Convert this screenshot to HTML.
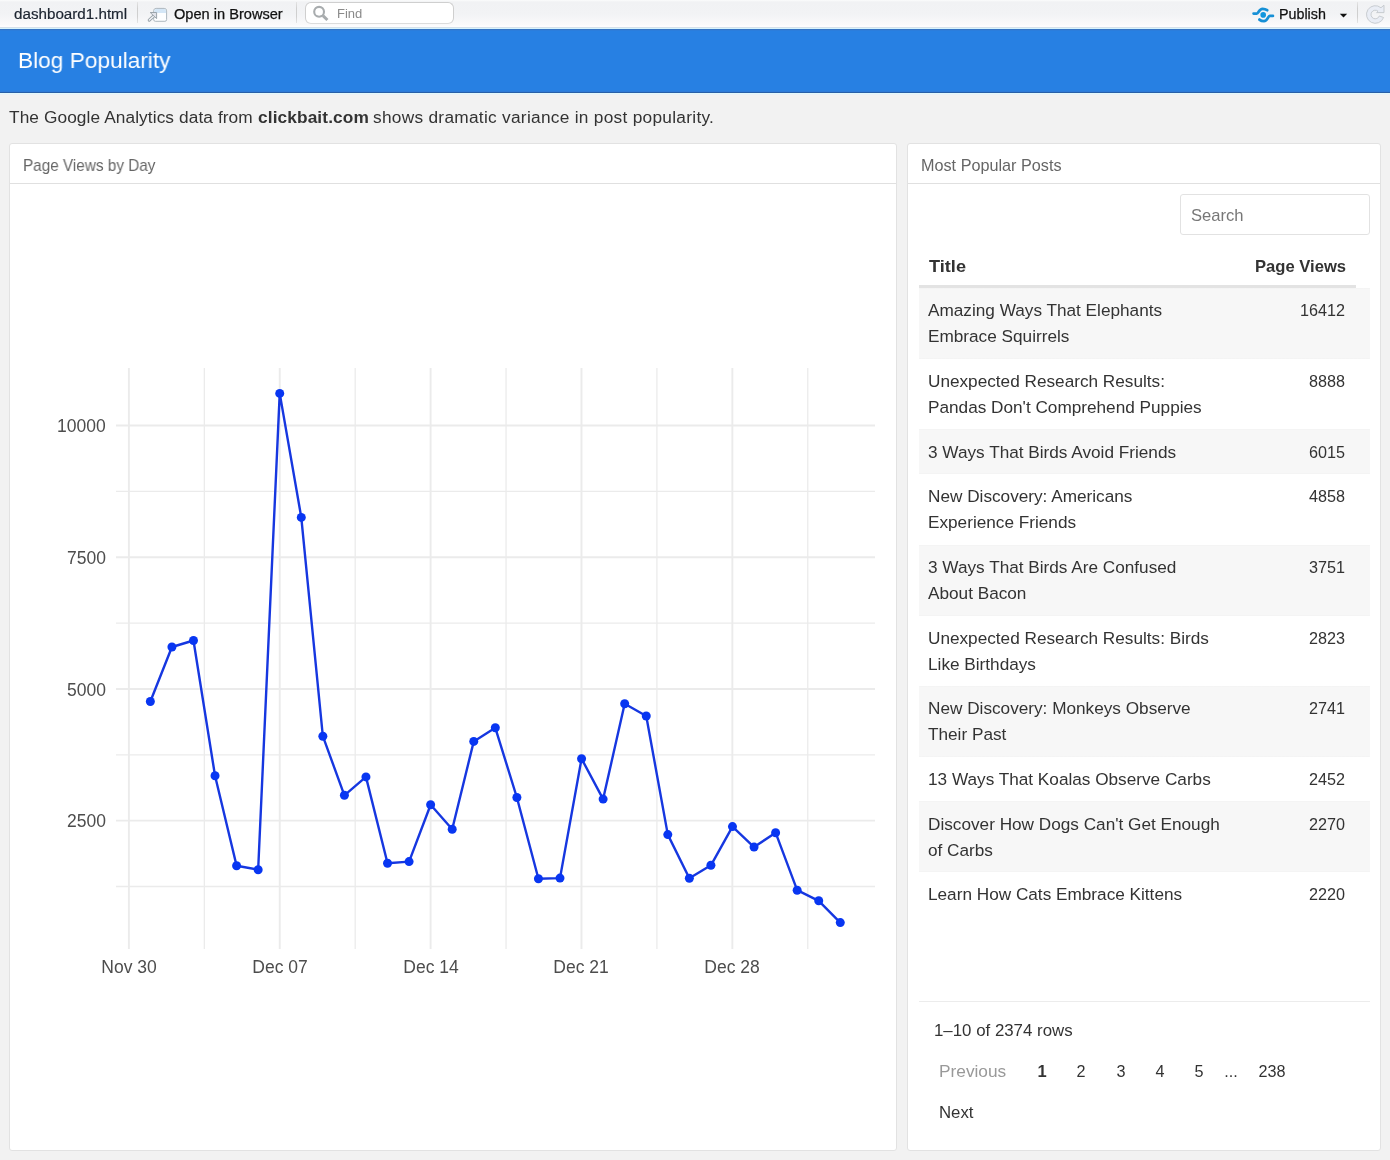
<!DOCTYPE html>
<html><head><meta charset="utf-8"><title>Blog Popularity</title>
<style>
html,body{margin:0;padding:0;width:1390px;height:1160px;overflow:hidden;background:#f2f2f2;position:relative;font-family:'Liberation Sans', sans-serif}
.t{position:absolute;white-space:pre;font-family:'Liberation Sans', sans-serif;will-change:transform}
#tb{position:absolute;left:0;top:0;width:1390px;height:31px;background:linear-gradient(#fbfcfc 0px,#f1f2f4 2px,#f2f3f5 14px,#fafafb 25px,#fdfdfe 26px,#fdfdfe 27px,#d5e0ea 27px,#d5e0ea 28px,#d6f3fc 28px,#d6f3fc 29px,#3574c4 29px,#3574c4 30px,#2c7ddb 30px,#2c7ddb 31px)}
.sep{position:absolute;top:2px;width:1px;height:21px;background:linear-gradient(#e4e4e4,#cfcfcf 30%,#cfcfcf 70%,#e4e4e4)}
#find{position:absolute;left:305px;top:2px;width:149px;height:22px;border:1px solid #cfcfcf;border-bottom-color:#dcdcdc;border-radius:6px;background:#fff;box-sizing:border-box}
#nav{position:absolute;left:0;top:31px;width:1390px;height:64px;background:linear-gradient(#2780e3 0px,#2780e3 59px,#2a7fdf 59px,#2a7fdf 60px,#2e7bd8 60px,#2e7bd8 61px,#295fa8 61px,#295fa8 62px,#e4f9fb 62px,#e4f9fb 63px,#ebf1f7 63px,#ebf1f7 64px)}
.card{position:absolute;background:#fff;border:1px solid #e2e2e2;border-radius:3px;box-sizing:border-box}
.hdr{position:absolute;height:1px;background:#e0e0e0}
#search{position:absolute;left:1180px;top:194px;width:190px;height:41px;border:1px solid #e2e2e2;border-radius:3px;box-sizing:border-box;background:#fff}
</style></head>
<body>
<div id="tb"></div><div class="t" style="left:14px;top:3.75px;font-size:15.2px;line-height:19.76px;color:#1c2430;font-weight:normal;-webkit-text-stroke:0.2px #1c2430">dashboard1.html</div>
<div class="sep" style="left:137px"></div><div id="find"></div><svg style="position:absolute;left:0;top:0" width="1390" height="28" viewBox="0 0 1390 28">
<path d="M153.7 19.6 V10.8 a2.4 2.4 0 0 1 2.4 -2.4 H164.2 a2.4 2.4 0 0 1 2.4 2.4 V19.6 a1.7 1.7 0 0 1 -1.7 1.7 H155.4 a1.7 1.7 0 0 1 -1.7 -1.7 Z" fill="#fdfeff" stroke="#a9b3ba" stroke-width="0.95"/>
<path d="M154.2 12.9 V10.9 a1.9 1.9 0 0 1 1.9 -1.9 H164.2 a1.9 1.9 0 0 1 1.9 1.9 V12.9 Z" fill="#d4e6f6"/>
<path d="M149.3 20.1 L154.4 15.4" stroke="#98a1a8" stroke-width="3.2" stroke-linecap="round"/>
<path d="M149.3 20.1 L154.4 15.4" stroke="#f3f5f8" stroke-width="1.3" stroke-linecap="round"/>
<path d="M150.2 12.5 H156.6 V18.6 Z" fill="#e1e3ea" stroke="#98a1a8" stroke-width="0.95" stroke-linejoin="round"/>
<circle cx="319.1" cy="11.8" r="4.9" fill="none" stroke="#a8acae" stroke-width="2.1"/>
<path d="M322.9 15.7 L327.4 20" stroke="#a8acae" stroke-width="3" stroke-linecap="butt"/>
<path d="M1253.6 13.6 H1256.8 C1258.6 13.6 1259 8.8 1262.6 8.8 C1264.5 8.8 1265.9 9.3 1267.2 10.2" fill="none" stroke="#1690d6" stroke-width="2.8" stroke-linecap="round"/>
<path d="M1259.4 19.6 C1260.6 20.6 1262 21.2 1264 21.2 C1267.5 21.2 1268 15.9 1269.7 15.9 H1272.9" fill="none" stroke="#1690d6" stroke-width="2.8" stroke-linecap="round"/>
<circle cx="1263.2" cy="14.9" r="2.8" fill="#1196de"/>
<path d="M1339.8 13.8 H1347.2 L1343.5 17.4 Z" fill="#111"/>
<path d="M1380.96 7.76 A8.8 8.8 0 1 0 1383.57 17.51 L1379.34 15.97 A4.3 4.3 0 1 1 1378.06 11.21 L1376.6 12.6 L1384 12.6 L1384 5.2 Z" fill="#e9edf5" stroke="#c3c7cc" stroke-width="0.9" stroke-linejoin="round"/>
</svg><div class="t" style="left:174px;top:5.15px;font-size:14.6px;line-height:18.98px;color:#111;font-weight:normal;-webkit-text-stroke:0.25px #111">Open in Browser</div>
<div class="sep" style="left:296px"></div><div class="t" style="left:337px;top:5.95px;font-size:13px;line-height:16.9px;color:#8a8a8a;font-weight:normal;">Find</div>
<div class="t" style="left:1279.4px;top:4.65px;font-size:14.3px;line-height:18.59px;color:#111;font-weight:normal;-webkit-text-stroke:0.25px #111">Publish</div>
<div class="sep" style="left:1357px"></div><div id="nav"></div><div class="t" style="left:18.2px;top:45.58px;font-size:22.9px;line-height:29.77px;color:#fff;font-weight:normal;transform:scaleX(0.99);transform-origin:left center;">Blog Popularity</div>
<div class="t" style="left:9.4px;top:105.66px;font-size:17.3px;line-height:22.49px;color:#333;font-weight:normal;letter-spacing:0.09px">The Google Analytics data from</div>
<div class="t" style="left:258.2px;top:105.66px;font-size:17.3px;line-height:22.49px;color:#333;font-weight:bold;letter-spacing:0.11px">clickbait.com</div>
<div class="t" style="left:373.2px;top:105.66px;font-size:17.3px;line-height:22.49px;color:#333;font-weight:normal;letter-spacing:0.28px">shows dramatic variance in post popularity.</div>
<div class="card" style="left:9px;top:143px;width:888px;height:1008px"></div><div class="hdr" style="left:10px;top:183px;width:886px"></div><div class="t" style="left:23.0px;top:155.56px;font-size:15.9px;line-height:20.67px;color:#666;font-weight:normal;transform:scaleX(0.963);transform-origin:left center;">Page Views by Day</div>
<div class="card" style="left:907px;top:143px;width:474px;height:1008px"></div><div class="hdr" style="left:908px;top:183px;width:472px"></div><div class="t" style="left:920.8px;top:155.56px;font-size:15.9px;line-height:20.67px;color:#666;font-weight:normal;transform:scaleX(1.02);transform-origin:left center;">Most Popular Posts</div>
<svg style="position:absolute;left:0;top:0" width="1390" height="1160" viewBox="0 0 1390 1160">
<line x1="128.90" y1="368" x2="128.90" y2="949" stroke="#ebebeb" stroke-width="1.9"/>
<line x1="204.33" y1="368" x2="204.33" y2="949" stroke="#ebebeb" stroke-width="1.3"/>
<line x1="279.76" y1="368" x2="279.76" y2="949" stroke="#ebebeb" stroke-width="1.9"/>
<line x1="355.19" y1="368" x2="355.19" y2="949" stroke="#ebebeb" stroke-width="1.3"/>
<line x1="430.62" y1="368" x2="430.62" y2="949" stroke="#ebebeb" stroke-width="1.9"/>
<line x1="506.05" y1="368" x2="506.05" y2="949" stroke="#ebebeb" stroke-width="1.3"/>
<line x1="581.48" y1="368" x2="581.48" y2="949" stroke="#ebebeb" stroke-width="1.9"/>
<line x1="656.91" y1="368" x2="656.91" y2="949" stroke="#ebebeb" stroke-width="1.3"/>
<line x1="732.34" y1="368" x2="732.34" y2="949" stroke="#ebebeb" stroke-width="1.9"/>
<line x1="807.77" y1="368" x2="807.77" y2="949" stroke="#ebebeb" stroke-width="1.3"/>
<line x1="116" y1="425.50" x2="875" y2="425.50" stroke="#ebebeb" stroke-width="1.9"/>
<line x1="116" y1="491.36" x2="875" y2="491.36" stroke="#ebebeb" stroke-width="1.3"/>
<line x1="116" y1="557.22" x2="875" y2="557.22" stroke="#ebebeb" stroke-width="1.9"/>
<line x1="116" y1="623.08" x2="875" y2="623.08" stroke="#ebebeb" stroke-width="1.3"/>
<line x1="116" y1="688.94" x2="875" y2="688.94" stroke="#ebebeb" stroke-width="1.9"/>
<line x1="116" y1="754.80" x2="875" y2="754.80" stroke="#ebebeb" stroke-width="1.3"/>
<line x1="116" y1="820.66" x2="875" y2="820.66" stroke="#ebebeb" stroke-width="1.9"/>
<line x1="116" y1="886.52" x2="875" y2="886.52" stroke="#ebebeb" stroke-width="1.3"/>
<polyline points="150.36,701.50 171.92,647.00 193.48,640.50 215.04,775.80 236.60,865.80 258.16,869.70 279.72,393.40 301.28,517.40 322.84,736.20 344.40,795.30 365.96,776.90 387.52,863.30 409.08,861.60 430.64,804.80 452.20,829.30 473.76,741.40 495.32,727.80 516.88,797.50 538.44,878.70 560.00,878.10 581.56,758.70 603.12,799.10 624.68,703.70 646.24,716.00 667.80,834.60 689.36,878.30 710.92,865.30 732.48,826.60 754.04,847.10 775.60,832.70 797.16,890.20 818.72,900.80 840.28,922.60" fill="none" stroke="#1637e0" stroke-width="2.4" stroke-linejoin="round"/>
<circle cx="150.36" cy="701.50" r="4.5" fill="#0836f2"/>
<circle cx="171.92" cy="647.00" r="4.5" fill="#0836f2"/>
<circle cx="193.48" cy="640.50" r="4.5" fill="#0836f2"/>
<circle cx="215.04" cy="775.80" r="4.5" fill="#0836f2"/>
<circle cx="236.60" cy="865.80" r="4.5" fill="#0836f2"/>
<circle cx="258.16" cy="869.70" r="4.5" fill="#0836f2"/>
<circle cx="279.72" cy="393.40" r="4.5" fill="#0836f2"/>
<circle cx="301.28" cy="517.40" r="4.5" fill="#0836f2"/>
<circle cx="322.84" cy="736.20" r="4.5" fill="#0836f2"/>
<circle cx="344.40" cy="795.30" r="4.5" fill="#0836f2"/>
<circle cx="365.96" cy="776.90" r="4.5" fill="#0836f2"/>
<circle cx="387.52" cy="863.30" r="4.5" fill="#0836f2"/>
<circle cx="409.08" cy="861.60" r="4.5" fill="#0836f2"/>
<circle cx="430.64" cy="804.80" r="4.5" fill="#0836f2"/>
<circle cx="452.20" cy="829.30" r="4.5" fill="#0836f2"/>
<circle cx="473.76" cy="741.40" r="4.5" fill="#0836f2"/>
<circle cx="495.32" cy="727.80" r="4.5" fill="#0836f2"/>
<circle cx="516.88" cy="797.50" r="4.5" fill="#0836f2"/>
<circle cx="538.44" cy="878.70" r="4.5" fill="#0836f2"/>
<circle cx="560.00" cy="878.10" r="4.5" fill="#0836f2"/>
<circle cx="581.56" cy="758.70" r="4.5" fill="#0836f2"/>
<circle cx="603.12" cy="799.10" r="4.5" fill="#0836f2"/>
<circle cx="624.68" cy="703.70" r="4.5" fill="#0836f2"/>
<circle cx="646.24" cy="716.00" r="4.5" fill="#0836f2"/>
<circle cx="667.80" cy="834.60" r="4.5" fill="#0836f2"/>
<circle cx="689.36" cy="878.30" r="4.5" fill="#0836f2"/>
<circle cx="710.92" cy="865.30" r="4.5" fill="#0836f2"/>
<circle cx="732.48" cy="826.60" r="4.5" fill="#0836f2"/>
<circle cx="754.04" cy="847.10" r="4.5" fill="#0836f2"/>
<circle cx="775.60" cy="832.70" r="4.5" fill="#0836f2"/>
<circle cx="797.16" cy="890.20" r="4.5" fill="#0836f2"/>
<circle cx="818.72" cy="900.80" r="4.5" fill="#0836f2"/>
<circle cx="840.28" cy="922.60" r="4.5" fill="#0836f2"/>
</svg><div class="t" style="right:1284.1px;top:415.26px;font-size:17.5px;line-height:22.75px;color:#4d4d4d;font-weight:normal;font-family:'Liberation Sans'">10000</div>
<div class="t" style="right:1284.1px;top:546.96px;font-size:17.5px;line-height:22.75px;color:#4d4d4d;font-weight:normal;font-family:'Liberation Sans'">7500</div>
<div class="t" style="right:1284.1px;top:678.76px;font-size:17.5px;line-height:22.75px;color:#4d4d4d;font-weight:normal;font-family:'Liberation Sans'">5000</div>
<div class="t" style="right:1284.1px;top:810.46px;font-size:17.5px;line-height:22.75px;color:#4d4d4d;font-weight:normal;font-family:'Liberation Sans'">2500</div>
<div class="t" style="left:-171.1px;width:600px;text-align:center;top:955.56px;font-size:17.5px;line-height:22.75px;color:#4d4d4d;font-weight:normal;">Nov 30</div>
<div class="t" style="left:-20.24000000000001px;width:600px;text-align:center;top:955.56px;font-size:17.5px;line-height:22.75px;color:#4d4d4d;font-weight:normal;">Dec 07</div>
<div class="t" style="left:130.62px;width:600px;text-align:center;top:955.56px;font-size:17.5px;line-height:22.75px;color:#4d4d4d;font-weight:normal;">Dec 14</div>
<div class="t" style="left:281.48px;width:600px;text-align:center;top:955.56px;font-size:17.5px;line-height:22.75px;color:#4d4d4d;font-weight:normal;">Dec 21</div>
<div class="t" style="left:432.34000000000003px;width:600px;text-align:center;top:955.56px;font-size:17.5px;line-height:22.75px;color:#4d4d4d;font-weight:normal;">Dec 28</div>
<div id="search"></div><div class="t" style="left:1190.6px;top:204.96px;font-size:16.6px;line-height:21.58px;color:#777;font-weight:normal;">Search</div>
<div class="t" style="left:928.8px;top:255.26px;font-size:17.3px;line-height:22.49px;color:#333;font-weight:bold;transform:scaleX(1.05);transform-origin:left center;">Title</div>
<div class="t" style="right:44.299999999999955px;top:255.96px;font-size:16.6px;line-height:21.58px;color:#333;font-weight:bold;">Page Views</div>
<div style="position:absolute;left:919px;top:285px;width:437px;height:3px;background:#e3e3e3"></div><div style="position:absolute;left:919px;top:288.00px;width:451px;height:71.00px;background:linear-gradient(#f2f2f2 0px,#f7f7f7 1.2px,#f7f7f7 calc(100% - 1.2px),#f2f2f2 100%)"></div><div class="t" style="left:928.0px;top:299.26px;font-size:17.2px;line-height:22.36px;color:#333;font-weight:normal;">Amazing Ways That Elephants</div>
<div class="t" style="left:928.0px;top:325.36px;font-size:17.2px;line-height:22.36px;color:#333;font-weight:normal;">Embrace Squirrels</div>
<div class="t" style="right:44.5px;top:300.26px;font-size:16.2px;line-height:21.06px;color:#333;font-weight:normal;">16412</div>
<div class="t" style="left:928.0px;top:369.96px;font-size:17.2px;line-height:22.36px;color:#333;font-weight:normal;">Unexpected Research Results:</div>
<div class="t" style="left:928.0px;top:396.06px;font-size:17.2px;line-height:22.36px;color:#333;font-weight:normal;">Pandas Don't Comprehend Puppies</div>
<div class="t" style="right:44.5px;top:370.96px;font-size:16.2px;line-height:21.06px;color:#333;font-weight:normal;">8888</div>
<div style="position:absolute;left:919px;top:429.40px;width:451px;height:44.90px;background:linear-gradient(#f2f2f2 0px,#f7f7f7 1.2px,#f7f7f7 calc(100% - 1.2px),#f2f2f2 100%)"></div><div class="t" style="left:928.0px;top:440.66px;font-size:17.2px;line-height:22.36px;color:#333;font-weight:normal;">3 Ways That Birds Avoid Friends</div>
<div class="t" style="right:44.5px;top:441.66px;font-size:16.2px;line-height:21.06px;color:#333;font-weight:normal;">6015</div>
<div class="t" style="left:928.0px;top:485.26px;font-size:17.2px;line-height:22.36px;color:#333;font-weight:normal;">New Discovery: Americans</div>
<div class="t" style="left:928.0px;top:511.36px;font-size:17.2px;line-height:22.36px;color:#333;font-weight:normal;">Experience Friends</div>
<div class="t" style="right:44.5px;top:486.26px;font-size:16.2px;line-height:21.06px;color:#333;font-weight:normal;">4858</div>
<div style="position:absolute;left:919px;top:544.70px;width:451px;height:71.00px;background:linear-gradient(#f2f2f2 0px,#f7f7f7 1.2px,#f7f7f7 calc(100% - 1.2px),#f2f2f2 100%)"></div><div class="t" style="left:928.0px;top:555.96px;font-size:17.2px;line-height:22.36px;color:#333;font-weight:normal;">3 Ways That Birds Are Confused</div>
<div class="t" style="left:928.0px;top:582.06px;font-size:17.2px;line-height:22.36px;color:#333;font-weight:normal;">About Bacon</div>
<div class="t" style="right:44.5px;top:556.96px;font-size:16.2px;line-height:21.06px;color:#333;font-weight:normal;">3751</div>
<div class="t" style="left:928.0px;top:626.66px;font-size:17.2px;line-height:22.36px;color:#333;font-weight:normal;">Unexpected Research Results: Birds</div>
<div class="t" style="left:928.0px;top:652.76px;font-size:17.2px;line-height:22.36px;color:#333;font-weight:normal;">Like Birthdays</div>
<div class="t" style="right:44.5px;top:627.66px;font-size:16.2px;line-height:21.06px;color:#333;font-weight:normal;">2823</div>
<div style="position:absolute;left:919px;top:686.10px;width:451px;height:71.00px;background:linear-gradient(#f2f2f2 0px,#f7f7f7 1.2px,#f7f7f7 calc(100% - 1.2px),#f2f2f2 100%)"></div><div class="t" style="left:928.0px;top:697.36px;font-size:17.2px;line-height:22.36px;color:#333;font-weight:normal;">New Discovery: Monkeys Observe</div>
<div class="t" style="left:928.0px;top:723.46px;font-size:17.2px;line-height:22.36px;color:#333;font-weight:normal;">Their Past</div>
<div class="t" style="right:44.5px;top:698.36px;font-size:16.2px;line-height:21.06px;color:#333;font-weight:normal;">2741</div>
<div class="t" style="left:928.0px;top:768.06px;font-size:17.2px;line-height:22.36px;color:#333;font-weight:normal;">13 Ways That Koalas Observe Carbs</div>
<div class="t" style="right:44.5px;top:769.06px;font-size:16.2px;line-height:21.06px;color:#333;font-weight:normal;">2452</div>
<div style="position:absolute;left:919px;top:801.40px;width:451px;height:71.00px;background:linear-gradient(#f2f2f2 0px,#f7f7f7 1.2px,#f7f7f7 calc(100% - 1.2px),#f2f2f2 100%)"></div><div class="t" style="left:928.0px;top:812.66px;font-size:17.2px;line-height:22.36px;color:#333;font-weight:normal;">Discover How Dogs Can't Get Enough</div>
<div class="t" style="left:928.0px;top:838.76px;font-size:17.2px;line-height:22.36px;color:#333;font-weight:normal;">of Carbs</div>
<div class="t" style="right:44.5px;top:813.66px;font-size:16.2px;line-height:21.06px;color:#333;font-weight:normal;">2270</div>
<div class="t" style="left:928.0px;top:883.36px;font-size:17.2px;line-height:22.36px;color:#333;font-weight:normal;">Learn How Cats Embrace Kittens</div>
<div class="t" style="right:44.5px;top:884.36px;font-size:16.2px;line-height:21.06px;color:#333;font-weight:normal;">2220</div>
<div style="position:absolute;left:919px;top:1001px;width:451px;height:1px;background:#ececec"></div><div class="t" style="left:934px;top:1020.01px;font-size:16.85px;line-height:21.91px;color:#333;font-weight:normal;">1–10 of 2374 rows</div>
<div class="t" style="left:938.8px;top:1059.56px;font-size:17.3px;line-height:22.49px;color:#999;font-weight:normal;">Previous</div>
<div class="t" style="left:741.9000000000001px;width:600px;text-align:center;top:1061.36px;font-size:16.5px;line-height:21.45px;color:#333;font-weight:bold;">1</div>
<div class="t" style="left:780.8px;width:600px;text-align:center;top:1060.66px;font-size:16.2px;line-height:21.06px;color:#333;font-weight:normal;">2</div>
<div class="t" style="left:820.5px;width:600px;text-align:center;top:1060.66px;font-size:16.2px;line-height:21.06px;color:#333;font-weight:normal;">3</div>
<div class="t" style="left:859.7px;width:600px;text-align:center;top:1060.66px;font-size:16.2px;line-height:21.06px;color:#333;font-weight:normal;">4</div>
<div class="t" style="left:899px;width:600px;text-align:center;top:1060.66px;font-size:16.2px;line-height:21.06px;color:#333;font-weight:normal;">5</div>
<div class="t" style="left:930.8px;width:600px;text-align:center;top:1060.66px;font-size:16.2px;line-height:21.06px;color:#333;font-weight:normal;">...</div>
<div class="t" style="left:971.5999999999999px;width:600px;text-align:center;top:1060.66px;font-size:16.2px;line-height:21.06px;color:#333;font-weight:normal;">238</div>
<div class="t" style="left:939px;top:1101.86px;font-size:16.8px;line-height:21.84px;color:#333;font-weight:normal;">Next</div>

</body></html>
